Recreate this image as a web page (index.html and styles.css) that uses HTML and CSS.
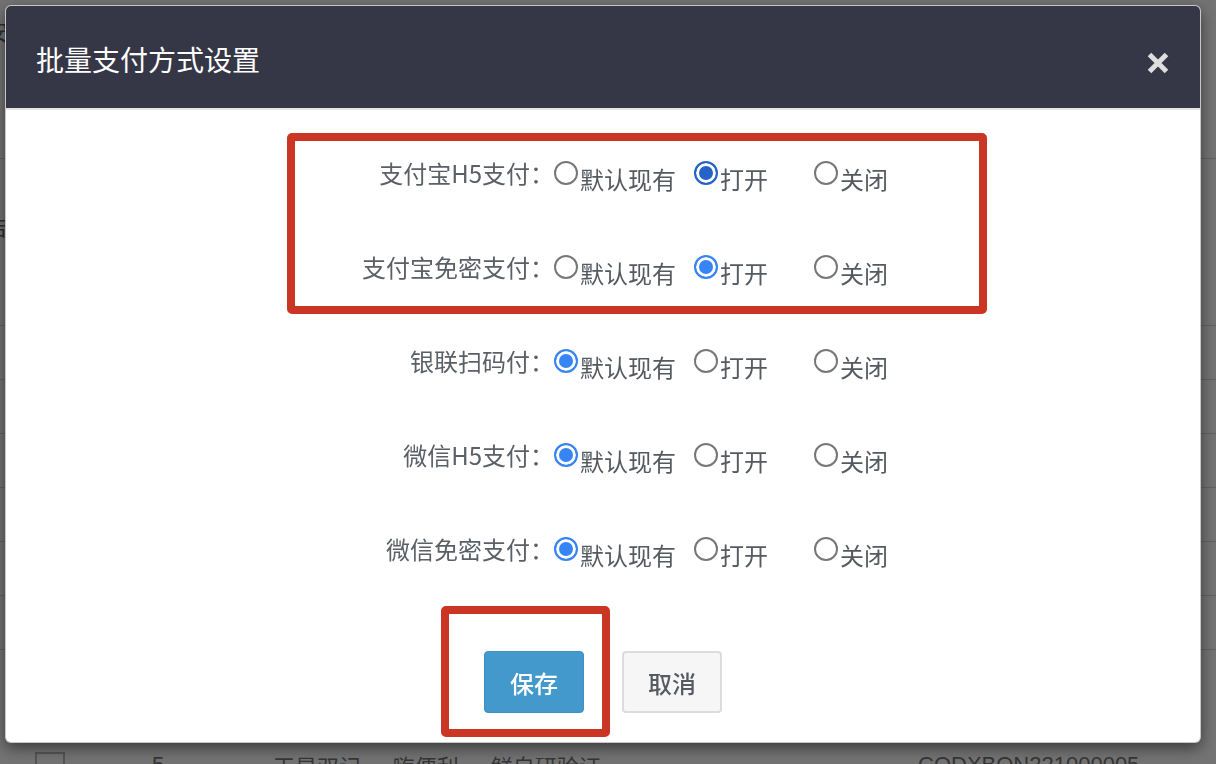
FILE: index.html
```html
<!DOCTYPE html>
<html lang="zh-CN">
<head>
<meta charset="utf-8">
<title>批量支付方式设置</title>
<link rel="stylesheet" href="styles.css">
</head>
<body>
<div class="page">
  <div class="toolbar"><span class="side-txt">安</span></div>
  <div class="trow tall"><span class="side-txt">告</span></div>
  <div class="trow"><span class="side-txt">1</span></div>
  <div class="trow"></div>
  <div class="trow"></div>
  <div class="trow"></div>
  <div class="trow"></div>
  <div class="trow"></div>
  <div class="trow last">
    <span class="cb"></span>
    <span class="c-no">5</span>
    <span class="c-name">天星双记 · 嗨便利 · 鲜自研验证</span>
    <span class="c-code">CODXBON221000005</span>
  </div>
</div>

<div class="backdrop"></div>

<div class="modal">
  <div class="modal-header">
    <h4 class="modal-title">批量支付方式设置</h4>
    <button class="close" type="button" aria-label="关闭">
      <svg width="22" height="22" viewBox="0 0 22 22"><path d="M2.5 2.5 L19.5 19.5 M19.5 2.5 L2.5 19.5" stroke="#dedede" stroke-width="5" fill="none"/></svg>
    </button>
  </div>
  <div class="modal-body">
    <form class="pay-form">
      <div class="frow">
        <span class="lbl">支付宝H5支付：</span>
        <label class="opt o1"><input type="radio" name="r1"><span class="otxt">默认现有</span></label>
        <label class="opt o2"><input type="radio" name="r1" class="focused" checked><span class="otxt">打开</span></label>
        <label class="opt"><input type="radio" name="r1"><span class="otxt">关闭</span></label>
      </div>
      <div class="frow">
        <span class="lbl">支付宝免密支付：</span>
        <label class="opt o1"><input type="radio" name="r2"><span class="otxt">默认现有</span></label>
        <label class="opt o2"><input type="radio" name="r2" checked><span class="otxt">打开</span></label>
        <label class="opt"><input type="radio" name="r2"><span class="otxt">关闭</span></label>
      </div>
      <div class="frow">
        <span class="lbl">银联扫码付：</span>
        <label class="opt o1"><input type="radio" name="r3" checked><span class="otxt">默认现有</span></label>
        <label class="opt o2"><input type="radio" name="r3"><span class="otxt">打开</span></label>
        <label class="opt"><input type="radio" name="r3"><span class="otxt">关闭</span></label>
      </div>
      <div class="frow">
        <span class="lbl">微信H5支付：</span>
        <label class="opt o1"><input type="radio" name="r4" checked><span class="otxt">默认现有</span></label>
        <label class="opt o2"><input type="radio" name="r4"><span class="otxt">打开</span></label>
        <label class="opt"><input type="radio" name="r4"><span class="otxt">关闭</span></label>
      </div>
      <div class="frow">
        <span class="lbl">微信免密支付：</span>
        <label class="opt o1"><input type="radio" name="r5" checked><span class="otxt">默认现有</span></label>
        <label class="opt o2"><input type="radio" name="r5"><span class="otxt">打开</span></label>
        <label class="opt"><input type="radio" name="r5"><span class="otxt">关闭</span></label>
      </div>
    </form>
    <div class="actions">
      <button class="btn btn-primary" type="button">保存</button>
      <button class="btn btn-default" type="button">取消</button>
    </div>
  </div>
  <div class="mark mark-a"></div>
  <div class="mark mark-b"></div>
</div>
</body>
</html>
```

FILE: styles.css
```css
html, body {
  margin: 0;
  padding: 0;
}
body {
  width: 1216px;
  height: 764px;
  overflow: hidden;
  background: #ffffff;
  font-family: "Noto Sans CJK SC", "Noto Sans", sans-serif;
}

/* ---------- background page (under the backdrop) ---------- */
.page {
  display: flex;
  flex-direction: column;
}
.toolbar {
  height: 159px;
  border-bottom: 1px solid #d9d9d9;
  box-sizing: border-box;
  padding-top: 14px;
}
.trow {
  height: 54px;
  border-bottom: 1px solid #d9d9d9;
  box-sizing: border-box;
}
.trow.tall {
  height: 167px;
  padding-top: 50px;
}
.side-txt {
  display: block;
  margin-left: -14px;
  font-size: 22px;
  color: #666;
}
.trow.last {
  height: 130px;
  border-bottom: none;
  display: grid;
  grid-template-columns: 35px 30px 87px 121px 645px auto;
  align-items: start;
  padding-top: 104px;
  font-family: "Liberation Sans", "Noto Sans CJK SC", sans-serif;
  font-size: 22px;
  line-height: 22px;
  color: #777;
}
.trow.last .cb {
  grid-column: 2;
  width: 30px;
  height: 30px;
  box-sizing: border-box;
  border: 2px solid #bbb;
  background: #fff;
  margin-top: -2px;
}
.c-no { grid-column: 4; }
.c-name { grid-column: 5; font-family: "Noto Sans CJK SC", sans-serif; }
.c-code { grid-column: 6; }

.backdrop {
  position: fixed;
  inset: 0;
  background: rgba(0, 0, 0, 0.55);
}

/* ---------- modal ---------- */
.modal {
  position: fixed;
  left: 5px;
  top: 5px;
  width: 1196px;
  height: 738px;
  box-sizing: border-box;
  border: 1px solid rgba(0, 0, 0, 0.22);
  border-radius: 6px;
  background: #ffffff;
  box-shadow: 0 5px 15px rgba(0, 0, 0, 0.5);
  display: flex;
  flex-direction: column;
}
.modal-header {
  height: 104px;
  box-sizing: border-box;
  background: #353746;
  border-bottom: 2px solid #e6e6e6;
  border-radius: 5px 5px 0 0;
  display: flex;
  align-items: center;
  padding: 0 31px 0 30px;
}
.modal-title {
  margin: 3px 0 0 0;
  font-size: 28px;
  line-height: 1;
  font-weight: 400;
  color: #ffffff;
}
.close {
  margin-left: auto;
  margin-top: 12px;
  padding: 0;
  border: 0;
  background: transparent;
  width: 22px;
  height: 22px;
  display: flex;
}

.modal-body {
  flex: 1;
  display: flex;
  flex-direction: column;
  padding-top: 16px;
}
.pay-form {
  display: flex;
  flex-direction: column;
}
.frow {
  height: 94px;
  display: flex;
  align-items: center;
}
.lbl {
  width: 548px;
  text-align: right;
  font-size: 24px;
  line-height: 24px;
  color: #5b6067;
  white-space: nowrap;
}
.opt {
  display: flex;
  align-items: center;
  font-size: 24px;
  color: #555a60;
}
.opt.o1 { width: 140px; }
.opt.o2 { width: 120px; }
.otxt {
  line-height: 24px;
  padding-top: 12px;
  margin-left: 2px;
}
.opt input {
  -webkit-appearance: none;
  appearance: none;
  margin: 0;
  width: 24px;
  height: 24px;
  box-sizing: border-box;
  border-radius: 50%;
  border: 2px solid #777777;
  background: #fff;
}
.opt input:checked {
  border-color: #3784f5;
  background: #3784f5;
  box-shadow: inset 0 0 0 3px #ffffff;
}
.opt input.focused:checked {
  border-color: #2563c6;
  background: #2563c6;
}

.actions {
  margin-top: 55px;
  display: flex;
  justify-content: center;
  gap: 38px;
}
.btn {
  width: 100px;
  height: 62px;
  box-sizing: border-box;
  border-radius: 4px;
  font-family: "Noto Sans CJK SC", sans-serif;
  font-size: 24px;
  font-weight: 500;
  padding: 0;
}
.btn-primary {
  background: #4399cb;
  border: 1px solid #3d90c1;
  color: #ffffff;
}
.btn-default {
  background: #f6f6f6;
  border: 2px solid #dcdcdc;
  color: #565b61;
}

/* ---------- red annotation frames ---------- */
.mark {
  position: absolute;
  border: 8px solid #cb3524;
  border-radius: 5px;
  box-sizing: border-box;
  pointer-events: none;
}
.mark-a {
  left: 281px;
  top: 127px;
  width: 700px;
  height: 181px;
}
.mark-b {
  left: 435px;
  top: 600px;
  width: 169px;
  height: 131px;
}
```
